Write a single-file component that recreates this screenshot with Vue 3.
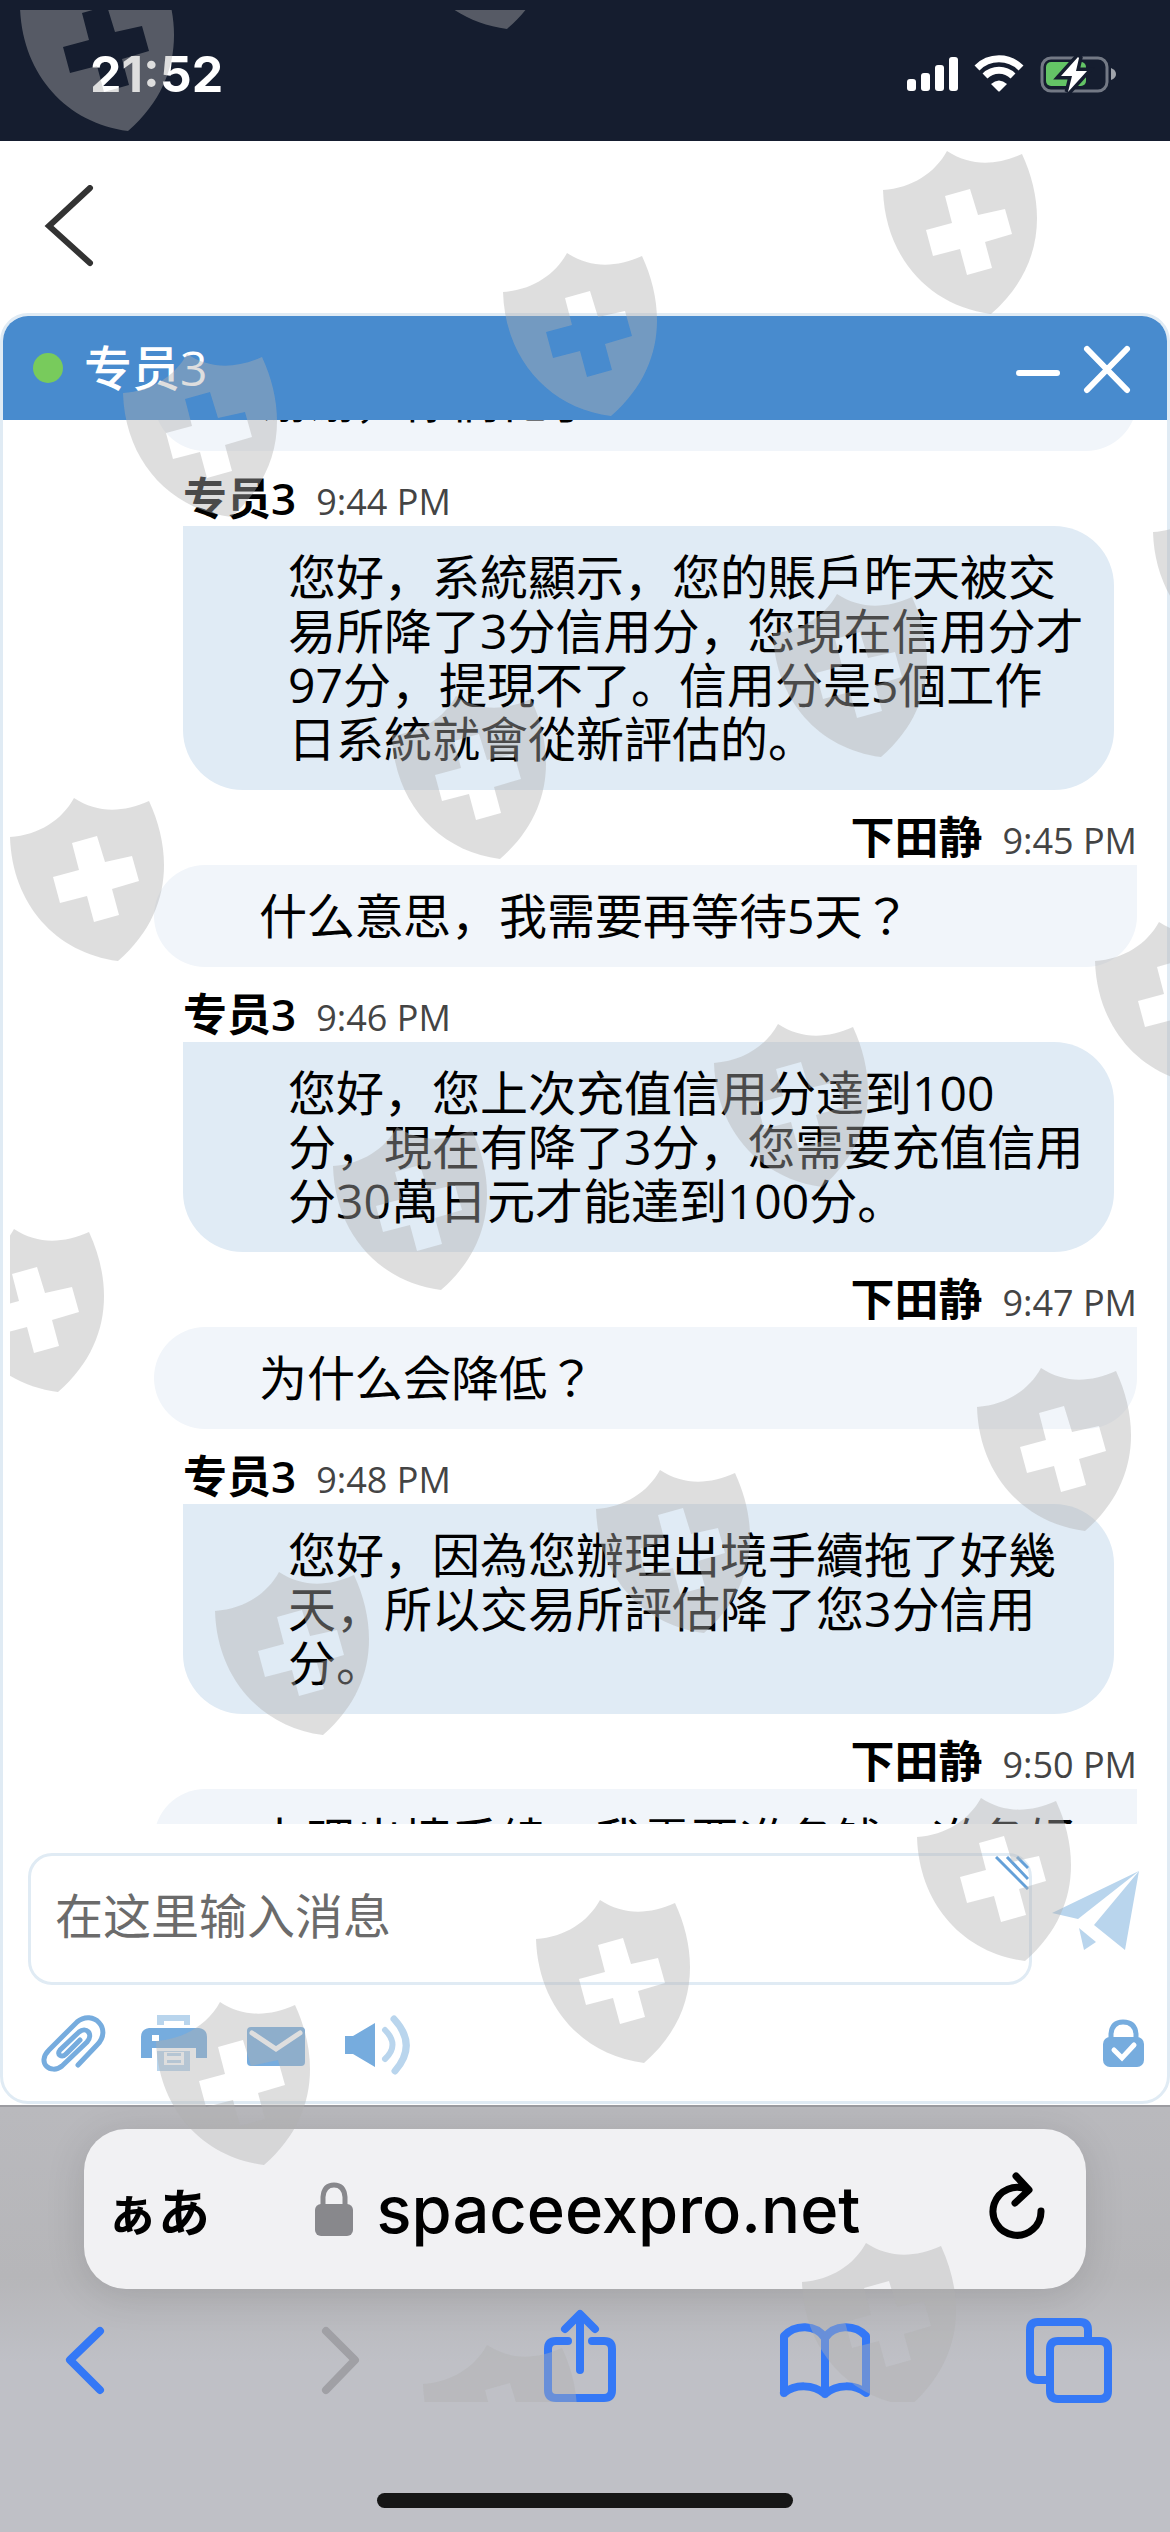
<template>
  <div class="page">
    <!-- 系统状态栏 -->
    <header class="status-bar">
      <span class="status-time">21:52</span>
      <svg class="status-icons" viewBox="0 0 212 48" aria-hidden="true">
        <g fill="#fff">
          <rect x="2" y="29" width="9" height="12" rx="3" />
          <rect x="16" y="23" width="9" height="18" rx="3" />
          <rect x="30" y="15" width="9" height="26" rx="3" />
          <rect x="44" y="7" width="9" height="34" rx="3" />
          <path d="M86 34 Q94 27 102 34 L95 41 Q94 42 93 41 Z" />
        </g>
        <g fill="none" stroke="#fff" stroke-width="7">
          <path d="M72 18 A31 31 0 0 1 116 18" />
          <path d="M80 26 A20 20 0 0 1 108 26" />
        </g>
        <rect x="137" y="8" width="65" height="33" rx="9" fill="none" stroke="#737985" stroke-width="3" />
        <path d="M206 18 Q211 20 211 24 Q211 28 206 30 Z" fill="#a0a4ab" />
        <rect x="141" y="12" width="40" height="24" rx="5" fill="#64c466" />
        <path class="bolt" d="M173 7 L156 26 H167 L163 42 L182 21 H171 L174 8 Z" />
      </svg>
    </header>

    <nav class="top-nav">
      <button class="back-btn" aria-label="返回">
        <svg viewBox="0 0 52 84" width="52" height="84"><path d="M48 3 L7 41 L48 78" /></svg>
      </button>
    </nav>

    <!-- 聊天窗口 -->
    <main class="chat">
      <div class="chat-header">
        <span class="online-dot"></span>
        <h1 class="chat-title">专员3</h1>
        <button class="head-btn" aria-label="最小化">
          <svg viewBox="0 0 48 52" width="48" height="52"><path d="M4 31 H42" stroke-width="6" /></svg>
        </button>
        <button class="head-btn" aria-label="关闭">
          <svg viewBox="0 0 48 52" width="48" height="52"><path d="M4 7 L44 48 M44 7 L4 48" stroke-width="6" /></svg>
        </button>
      </div>

      <div ref="logRef" class="chat-log">
        <div v-for="(msg, i) in messages" :key="i" :class="['msg', msg.from]">
          <div v-if="msg.time" class="msg-meta">
            <span class="msg-name">{{ msg.name }}</span>
            <time class="msg-time">{{ msg.time }}</time>
          </div>
          <p class="bubble">{{ msg.text }}</p>
        </div>
      </div>

      <form class="composer" @submit.prevent="send">
        <div class="input-box">
          <textarea v-model="draft" rows="1" placeholder="在这里输入消息" aria-label="在这里输入消息"></textarea>
          <svg class="grip" viewBox="0 0 34 34" aria-hidden="true">
            <path d="M1 1 L33 33 M12 1 L33 23 M22 1 L33 12" />
          </svg>
        </div>
        <button type="submit" class="send-btn" aria-label="发送">
          <svg viewBox="0 0 88 96" width="88" height="96">
            <path d="M0 42 L87 0 L26 48 Z M87 0 L73 79 L42 54 Z M27 57 L44 71 L32 79 Z" />
          </svg>
        </button>
      </form>

      <div class="tools">
        <button class="tool-btn" aria-label="附件">
          <svg viewBox="0 0 72 72">
            <path
              class="line"
              d="M40 58 L59 38 C75 22 55 2 39 15 L11 43 C-2 56 13 68 24 59 L49 35 C56 27 48 19 41 25 L22 43 C18 48 24 51 28 47 L42 33"
            />
          </svg>
        </button>
        <button class="tool-btn" aria-label="打印">
          <svg viewBox="0 0 72 72">
            <path class="light" fill-rule="evenodd" d="M18 8 H51 V18 H45 V14 H25 V18 H18 Z" />
            <path
              class="solid"
              fill-rule="evenodd"
              d="M10 21 H60 Q68 22 68 30 V51 H57 V41 H13 V51 H2 V30 Q2 22 10 21 Z M13 28 V34 H20 V28 Z"
            />
            <path
              class="light"
              fill-rule="evenodd"
              d="M18 44 H51 V64 H18 Z M25 45 V58 H45 V45 Z M28 46 H42 V49 H28 Z M28 53 H42 V56 H28 Z"
            />
          </svg>
        </button>
        <button class="tool-btn" aria-label="邮件">
          <svg viewBox="0 0 72 72">
            <rect class="solid" x="7" y="20" width="58" height="39" rx="4" />
            <path class="fold" d="M12 26 L36 42 L60 26" />
          </svg>
        </button>
        <button class="tool-btn" aria-label="声音">
          <svg viewBox="0 0 72 72">
            <path class="solid" d="M4 29 H12 L34 16 V60 L12 47 H4 Z" />
            <path class="wave" stroke-width="6" d="M44 23 Q59 38 44 52" />
            <path class="wave" stroke-width="7" d="M53 12 Q77 38 54 64" />
          </svg>
        </button>
        <svg class="secure" viewBox="0 0 42 48" aria-hidden="true">
          <path class="shackle" d="M8 22 V15 Q9 3 20 3 Q32 3 33 15 V22" />
          <rect class="solid" x="0" y="18" width="41" height="30" rx="7" />
          <path class="check" d="M11 31 L19 39 L31 26" />
        </svg>
      </div>
    </main>

    <!-- 浏览器底栏 -->
    <footer class="browser">
      <div class="url-bar">
        <button class="text-size" aria-label="文字大小">ぁあ</button>
        <span class="url">
          <svg viewBox="0 0 38 54" width="38" height="54" aria-hidden="true">
            <path d="M8 26 V15 Q9 3 19 3 Q29 3 30 15 V26" fill="none" stroke="#88888c" stroke-width="5" />
            <rect y="22" width="38" height="32" rx="6" fill="#88888c" />
          </svg>
          spaceexpro.net
        </span>
        <button class="reload" aria-label="重新加载">
          <svg viewBox="0 0 72 80" width="72" height="80">
            <path d="M60 42 A24 24 0 1 1 47 21 M35 7 L48 21 L34 34" />
          </svg>
        </button>
      </div>

      <div class="browser-tools">
        <button v-for="item in browserTools" :key="item.label" :class="{ off: item.off }" :aria-label="item.label">
          <svg viewBox="0 0 96 112" width="96" height="112"><path :d="item.d" /></svg>
        </button>
      </div>
      <div class="home-indicator"></div>
    </footer>

    <!-- 盾牌水印 -->
    <div class="watermark" aria-hidden="true">
      <svg
        v-for="(p, i) in shields"
        :key="i"
        class="shield"
        viewBox="0 0 162 163"
        :style="{ left: p[0] + 'px', top: p[1] + 'px' }"
      >
        <path
          fill-rule="evenodd"
          d="M0 39 C29 37 52 22 64 0 C87 15 112 15 139 3 C163 55 162 116 108 163 C46 155 2 106 0 39 Z M62 45 L87 38 L95 64 L122 58 L129 83 L102 91 L109 117 L84 124 L77 98 L50 105 L43 79 L69 72 Z"
        />
      </svg>
    </div>
  </div>
</template>

<script setup>
import { ref, onMounted } from 'vue'

const logRef = ref(null)
const draft = ref('')

const messages = ref([
  { from: 'user', text: '谢谢，你们忙了' },
  {
    from: 'agent',
    name: '专员3',
    time: '9:44 PM',
    text: '您好，系統顯示，您的賬戶昨天被交易所降了3分信用分，您現在信用分才97分，提現不了。信用分是5個工作日系統就會從新評估的。'
  },
  { from: 'user', name: '下田静', time: '9:45 PM', text: '什么意思，我需要再等待5天？' },
  {
    from: 'agent',
    name: '专员3',
    time: '9:46 PM',
    text: '您好，您上次充值信用分達到100分，現在有降了3分，您需要充值信用分30萬日元才能達到100分。'
  },
  { from: 'user', name: '下田静', time: '9:47 PM', text: '为什么会降低？' },
  {
    from: 'agent',
    name: '专员3',
    time: '9:48 PM',
    text: '您好，因為您辦理出境手續拖了好幾天，所以交易所評估降了您3分信用分。'
  },
  { from: 'user', name: '下田静', time: '9:50 PM', text: '办理出境手续，我需要准备钱，准备好' }
])

const browserTools = [
  { label: '后退', d: 'M64 27 L34 56 L64 86' },
  { label: '前进', d: 'M44 27 L73 56 L44 86', off: true },
  {
    label: '分享',
    d: 'M39 37 H27 Q19 37 19 45 V86 Q19 94 27 94 H75 Q83 94 83 86 V45 Q83 37 75 37 H63 M51 66 V11 M36 25 L51 10 L66 25'
  },
  {
    label: '书签',
    d: 'M9 89 V32 C20 20 41 20 50 34 C59 20 80 20 91 32 V89 C80 80 62 80 50 90 C38 80 20 80 9 89 M50 34 V90'
  },
  {
    label: '标签页',
    d: 'M67 36 V26 Q67 18 59 18 H17 Q9 18 9 26 V68 Q9 76 17 76 H28 M37 37 H79 Q87 37 87 45 V87 Q87 95 79 95 H37 Q29 95 29 87 V45 Q29 37 37 37 Z'
  }
]

// 水印坐标，相对水印层左上角
const shields = [
  [10, -42], [389, -144], [873, 141], [493, 243], [113, 344], [1143, 483], [763, 584],
  [382, 686], [0, 788], [1085, 912], [704, 1014], [323, 1117], [-60, 1219], [967, 1358],
  [586, 1460], [205, 1562], [907, 1788], [526, 1890], [146, 1992], [792, 2233], [413, 2335]
]

const send = () => {
  const text = draft.value.trim()
  if (!text) return
  messages.value.push({ from: 'user', name: '下田静', time: '9:52 PM', text })
  draft.value = ''
}

onMounted(() => {
  logRef.value.scrollTop = 71
})
</script>

<style>
body {
  margin: 0;
  background: #fff;
}
</style>

<style scoped>
.page {
  position: relative;
  display: flex;
  flex-direction: column;
  height: 100vh;
  overflow: hidden;
  background: #fff;
  font-family: "Open Sans", "Noto Sans CJK SC", sans-serif;
}

.page * {
  box-sizing: border-box;
}

button {
  padding: 0;
  border: none;
  background: none;
  font: inherit;
  color: inherit;
  cursor: pointer;
}

svg {
  display: block;
}

.status-bar {
  flex: none;
  display: flex;
  align-items: center;
  justify-content: space-between;
  height: 141px;
  padding: 7px 53px 0 90px;
  background: #151d2f;
  color: #fff;
}

.status-time {
  font-family: Inter, sans-serif;
  font-size: 50px;
  font-weight: 700;
}

.status-icons {
  width: 212px;
  height: 48px;
}

.bolt {
  fill: #fff;
  stroke: #151d2f;
  stroke-width: 7;
  paint-order: stroke;
}

.top-nav {
  flex: none;
  display: flex;
  align-items: center;
  height: 172px;
  padding: 0 42px;
}

.back-btn path {
  fill: none;
  stroke: #333;
  stroke-width: 6;
  stroke-linecap: round;
}

.chat {
  flex: 1;
  min-height: 0;
  display: flex;
  flex-direction: column;
  border: 3px solid #e0ebf4;
  border-radius: 28px;
  overflow: hidden;
}

.chat-header {
  flex: none;
  display: flex;
  align-items: center;
  height: 104px;
  padding: 0 36px 0 30px;
  background: #488bce;
  color: #fff;
}

.online-dot {
  width: 30px;
  height: 30px;
  border-radius: 50%;
  background: #78cb5c;
}

.chat-title {
  flex: 1;
  margin: 0 0 0 21px;
  font-size: 48px;
  line-height: 54px;
  font-weight: 500;
}

.head-btn {
  margin-left: 20px;
}

.head-btn path {
  fill: none;
  stroke: #fff;
  stroke-linecap: round;
}

.chat-log {
  flex: 1;
  min-height: 0;
  overflow-y: auto;
  scrollbar-width: none;
}

.msg {
  padding: 0 53px 0 180px;
}

.msg.user {
  padding: 0 30px 0 151px;
}

.msg-meta {
  display: flex;
  align-items: baseline;
  gap: 20px;
  height: 75px;
  padding-top: 20px;
  line-height: 54px;
}

.user .msg-meta {
  justify-content: flex-end;
}

.msg-name {
  font-size: 44px;
  font-weight: 600;
  color: #000;
}

.msg-time {
  font-size: 36px;
  color: #444;
}

.bubble {
  margin: 0;
  padding: 24px 28px 24px 105px;
  border-radius: 0 60px 60px 60px;
  background: #e0ebf5;
  font-size: 48px;
  line-height: 54px;
  color: #000;
}

.user .bubble {
  border-radius: 60px 0 60px 60px;
  background: #f1f5fa;
  font-family: "Open Sans", "Noto Sans CJK JP", sans-serif;
}

.composer {
  flex: none;
  display: flex;
  align-items: center;
  gap: 20px;
  padding: 29px 27px 0 25px;
}

.input-box {
  position: relative;
  flex: 1;
  border: 3px solid #e0ebf4;
  border-radius: 24px;
}

.input-box textarea {
  display: block;
  width: 100%;
  height: 126px;
  padding: 33px 24px;
  border: none;
  outline: none;
  resize: none;
  overflow: hidden;
  background: transparent;
  font: inherit;
  font-size: 48px;
  line-height: 54px;
  color: #000;
}

.input-box textarea::placeholder {
  color: #6b6b6b;
  opacity: 1;
}

.grip {
  position: absolute;
  top: 0;
  right: 0;
  width: 34px;
  height: 34px;
}

.grip path {
  fill: none;
  stroke: #64a0d8;
  stroke-width: 3;
}

.send-btn path {
  fill: #b9d5ed;
}

.tools {
  flex: none;
  display: flex;
  align-items: center;
  gap: 29px;
  height: 116px;
  padding: 0 22px 0 35px;
}

.tool-btn svg {
  width: 72px;
  height: 72px;
}

.solid {
  fill: #76acde;
}

.light {
  fill: #b9d5ed;
}

.line,
.shackle {
  fill: none;
  stroke: #76acde;
  stroke-width: 5;
  stroke-linecap: round;
}

.fold,
.check {
  fill: none;
  stroke: #fff;
  stroke-width: 5;
  stroke-linecap: round;
}

.wave {
  fill: none;
  stroke: #b9d5ed;
  stroke-linecap: round;
}

.secure {
  width: 42px;
  height: 48px;
  margin-left: auto;
}

.browser {
  flex: none;
  display: flex;
  flex-direction: column;
  margin-top: 1px;
  padding: 22px 0 24px;
  border-top: 2px solid #9c9ca1;
  background: linear-gradient(#b9b9bd, #b6b6b9 40%, #bfc0c6 60%);
}

.url-bar {
  display: flex;
  align-items: center;
  justify-content: space-between;
  height: 160px;
  margin: 0 84px;
  padding: 0 33px 0 22px;
  border-radius: 42px;
  background: #f1f1f3;
  box-shadow: 0 6px 40px rgba(0, 0, 0, 0.12);
  color: #000;
}

.text-size {
  font-family: "Noto Sans CJK JP", sans-serif;
  font-size: 52px;
  font-weight: 700;
}

.url {
  display: flex;
  align-items: center;
  gap: 24px;
  font-family: Inter, sans-serif;
  font-size: 65px;
  font-weight: 500;
}

.reload {
  padding-left: 16px;
}

.reload path {
  fill: none;
  stroke: #000;
  stroke-width: 7;
  stroke-linecap: round;
  stroke-linejoin: round;
}

.browser-tools {
  display: flex;
  justify-content: space-between;
  margin: 15px 53px 0 36px;
}

.browser-tools path {
  fill: none;
  stroke: #3478f6;
  stroke-width: 8;
  stroke-linecap: round;
  stroke-linejoin: round;
}

.browser-tools .off path {
  stroke: #a0a0a5;
}

.home-indicator {
  align-self: center;
  width: 416px;
  height: 15px;
  margin-top: 77px;
  border-radius: 8px;
  background: #161616;
}

.watermark {
  position: absolute;
  inset: 10px 0 130px 10px;
  overflow: hidden;
  pointer-events: none;
}

.shield {
  position: absolute;
  width: 162px;
  height: 163px;
  fill: rgba(176, 176, 176, 0.42);
}
</style>
